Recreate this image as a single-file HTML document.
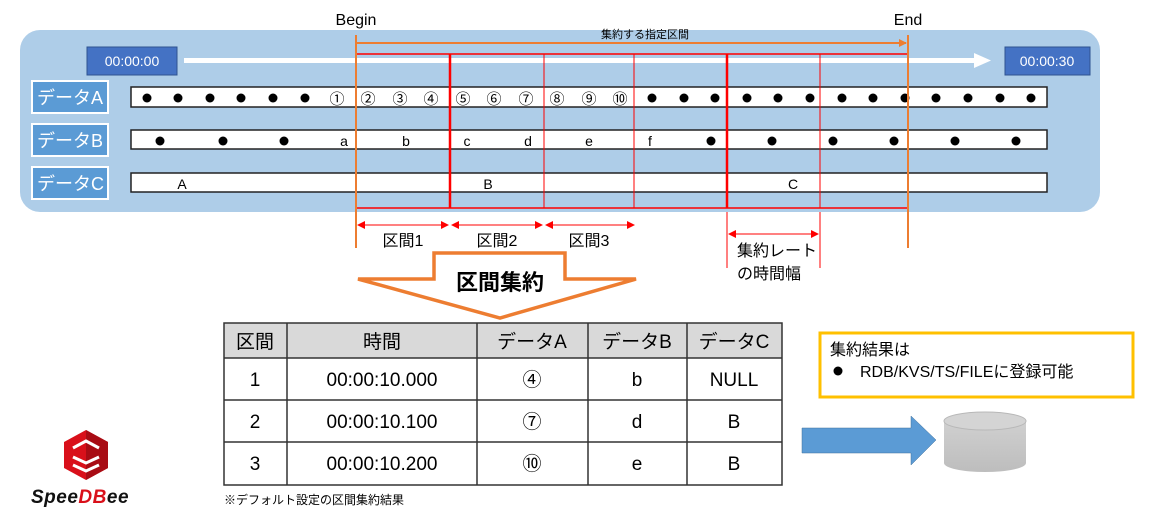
<!DOCTYPE html>
<html><head><meta charset="utf-8"><style>
body{margin:0;width:1150px;height:518px;background:#fff;overflow:hidden;font-family:"Liberation Sans","Noto Sans CJK JP",sans-serif}
svg text{font-family:"Liberation Sans","Noto Sans CJK JP",sans-serif}
</style></head><body>
<svg width="1150" height="518" viewBox="0 0 1150 518" xmlns="http://www.w3.org/2000/svg">
<defs>
<marker id="ra" markerWidth="8" markerHeight="8" refX="7" refY="4" orient="auto-start-reverse" markerUnits="userSpaceOnUse"><path d="M0,0 L8,4 L0,8 z" fill="#f00"/></marker>
<marker id="oa" markerWidth="8" markerHeight="8" refX="7" refY="4" orient="auto" markerUnits="userSpaceOnUse"><path d="M0,0 L8,4 L0,8 z" fill="#ed7d31"/></marker>
<linearGradient id="cy" x1="0" x2="0" y1="0" y2="1"><stop offset="0" stop-color="#d0d0d0"/><stop offset="1" stop-color="#bdbdbd"/></linearGradient>
</defs>
<rect x="20" y="30" width="1080" height="182" rx="20" fill="#aecde8"/>
<text x="356" y="25" font-size="16" text-anchor="middle">Begin</text>
<text x="908" y="25" font-size="16" text-anchor="middle">End</text>
<rect x="184" y="58" width="790" height="5" fill="#fff"/>
<path d="M974,53 L991,60.5 L974,68 z" fill="#fff"/>
<rect x="87" y="47" width="90" height="28" fill="#4472c4" stroke="#2f528f"/>
<text x="132" y="66" font-size="14" fill="#fff" text-anchor="middle">00:00:00</text>
<rect x="1005" y="47" width="85" height="28" fill="#4472c4" stroke="#2f528f"/>
<text x="1047" y="66" font-size="14" fill="#fff" text-anchor="middle">00:00:30</text>
<rect x="131" y="87" width="916" height="20" fill="#fff" stroke="#222" stroke-width="1.5"/>
<rect x="131" y="130" width="916" height="19" fill="#fff" stroke="#222" stroke-width="1.5"/>
<rect x="131" y="173" width="916" height="19" fill="#fff" stroke="#222" stroke-width="1.5"/>
<g fill="#5b9bd5" stroke="#fff" stroke-width="2">
<rect x="32" y="81" width="76" height="32"/><rect x="32" y="124" width="76" height="32"/><rect x="32" y="167" width="76" height="32"/></g>
<g font-size="18" fill="#fff"><text x="37" y="104">データA</text><text x="37" y="147">データB</text><text x="37" y="190">データC</text></g>
<g fill="#000">
<circle cx="147" cy="98" r="4.5"/><circle cx="178" cy="98" r="4.5"/><circle cx="210" cy="98" r="4.5"/><circle cx="241" cy="98" r="4.5"/><circle cx="273" cy="98" r="4.5"/><circle cx="305" cy="98" r="4.5"/>
<circle cx="652" cy="98" r="4.5"/><circle cx="684" cy="98" r="4.5"/><circle cx="715" cy="98" r="4.5"/><circle cx="747" cy="98" r="4.5"/><circle cx="778" cy="98" r="4.5"/><circle cx="810" cy="98" r="4.5"/><circle cx="842" cy="98" r="4.5"/><circle cx="873" cy="98" r="4.5"/><circle cx="905" cy="98" r="4.5"/><circle cx="936" cy="98" r="4.5"/><circle cx="968" cy="98" r="4.5"/><circle cx="1000" cy="98" r="4.5"/><circle cx="1031" cy="98" r="4.5"/>
<circle cx="160" cy="141" r="4.5"/><circle cx="223" cy="141" r="4.5"/><circle cx="284" cy="141" r="4.5"/><circle cx="711" cy="141" r="4.5"/><circle cx="772" cy="141" r="4.5"/><circle cx="833" cy="141" r="4.5"/><circle cx="894" cy="141" r="4.5"/><circle cx="955" cy="141" r="4.5"/><circle cx="1016" cy="141" r="4.5"/>
</g>
<g font-size="15" text-anchor="middle">
<text x="337" y="104">①</text><text x="368" y="104">②</text><text x="400" y="104">③</text><text x="431" y="104">④</text><text x="463" y="104">⑤</text><text x="494" y="104">⑥</text><text x="526" y="104">⑦</text><text x="557" y="104">⑧</text><text x="589" y="104">⑨</text><text x="620" y="104">⑩</text>
</g>
<g font-size="14" text-anchor="middle">
<text x="344" y="146">a</text><text x="406" y="146">b</text><text x="467" y="146">c</text><text x="528" y="146">d</text><text x="589" y="146">e</text><text x="650" y="146">f</text>
<text x="182" y="189">A</text><text x="488" y="189">B</text><text x="793" y="189">C</text>
</g>
<g stroke="#f00" fill="none">
<rect x="356" y="54" width="552" height="154" stroke-width="1.5"/>
<line x1="450" y1="54" x2="450" y2="208" stroke-width="2.5"/>
<line x1="544" y1="54" x2="544" y2="208"/>
<line x1="634" y1="54" x2="634" y2="208"/>
<line x1="727" y1="54" x2="727" y2="208" stroke-width="2.5"/>
<line x1="820" y1="54" x2="820" y2="208"/>
<line x1="727" y1="212" x2="727" y2="268"/>
<line x1="820" y1="212" x2="820" y2="268"/>
<line x1="358" y1="225" x2="448" y2="225" marker-start="url(#ra)" marker-end="url(#ra)"/>
<line x1="452" y1="225" x2="542" y2="225" marker-start="url(#ra)" marker-end="url(#ra)"/>
<line x1="546" y1="225" x2="634" y2="225" marker-start="url(#ra)" marker-end="url(#ra)"/>
<line x1="729" y1="234" x2="818" y2="234" marker-start="url(#ra)" marker-end="url(#ra)"/>
</g>
<g stroke="#ed7d31" stroke-width="2" fill="none">
<line x1="356" y1="35" x2="356" y2="248"/>
<line x1="908" y1="35" x2="908" y2="248"/>
<line x1="356" y1="43" x2="906" y2="43" marker-end="url(#oa)"/>
</g>
<text x="645" y="38" font-size="11" text-anchor="middle">集約する指定区間</text>
<g font-size="16" text-anchor="middle"><text x="403" y="246">区間1</text><text x="497" y="246">区間2</text><text x="589" y="246">区間3</text></g>
<text x="737" y="256" font-size="16">集約レート</text>
<text x="737" y="279" font-size="16">の時間幅</text>
<path d="M434,253 L565,253 L565,279 L636,279 L500,318 L358,279 L434,279 z" fill="#fff" stroke="#ed7d31" stroke-width="3.5"/>
<text x="500" y="290" font-size="22" font-weight="bold" text-anchor="middle">区間集約</text>
<rect x="224" y="323" width="558" height="35" fill="#d9d9d9"/>
<g stroke="#333" stroke-width="1.5" fill="none">
<rect x="224" y="323" width="558" height="162"/>
<line x1="224" y1="358" x2="782" y2="358"/><line x1="224" y1="400" x2="782" y2="400"/><line x1="224" y1="442" x2="782" y2="442"/>
<line x1="287" y1="323" x2="287" y2="485"/><line x1="477" y1="323" x2="477" y2="485"/><line x1="588" y1="323" x2="588" y2="485"/><line x1="687" y1="323" x2="687" y2="485"/>
</g>
<g font-size="19" text-anchor="middle">
<text x="255" y="348">区間</text><text x="382" y="348">時間</text><text x="532" y="348">データA</text><text x="637" y="348">データB</text><text x="734" y="348">データC</text>
<text x="255" y="386">1</text><text x="382" y="386">00:00:10.000</text><text x="532" y="386">④</text><text x="637" y="386">b</text><text x="734" y="386">NULL</text>
<text x="255" y="428">2</text><text x="382" y="428">00:00:10.100</text><text x="532" y="428">⑦</text><text x="637" y="428">d</text><text x="734" y="428">B</text>
<text x="255" y="470">3</text><text x="382" y="470">00:00:10.200</text><text x="532" y="470">⑩</text><text x="637" y="470">e</text><text x="734" y="470">B</text>
</g>
<text x="224" y="504" font-size="12">※デフォルト設定の区間集約結果</text>
<rect x="820" y="333" width="313" height="64" fill="#fff" stroke="#ffc000" stroke-width="3"/>
<text x="830" y="355" font-size="16">集約結果は</text>
<circle cx="838" cy="371" r="4.5"/>
<text x="860" y="377" font-size="16">RDB/KVS/TS/FILEに登録可能</text>
<path d="M802,428 L911,428 L911,416 L936,440 L911,465 L911,453 L802,453 z" fill="#5b9bd5" stroke="#41719c" stroke-width="0.5"/>
<path d="M944,421 L944,463 A41,9 0 0 0 1026,463 L1026,421 z" fill="url(#cy)"/>
<ellipse cx="985" cy="421" rx="41" ry="9" fill="#d4d4d4" stroke="#b8b8b8"/>
<path d="M86,430 L108,442 L108,468 L86,480 L64,468 L64,442 z" fill="#d9101a"/>
<path d="M86,430 L86,480 L108,468 L108,442 z" fill="#a80c14"/>
<g fill="none" stroke="#fff" stroke-width="3">
<path d="M73,448 L86,441 L99,448"/><path d="M73,457 L86,463 L99,457"/><path d="M73,465 L86,471 L99,465"/>
</g>
<text x="31" y="503" font-size="19" font-weight="bold" font-style="italic" letter-spacing="0.5"><tspan fill="#111">Spee</tspan><tspan fill="#d9101a">DB</tspan><tspan fill="#111">ee</tspan></text>
</svg>
</body></html>
